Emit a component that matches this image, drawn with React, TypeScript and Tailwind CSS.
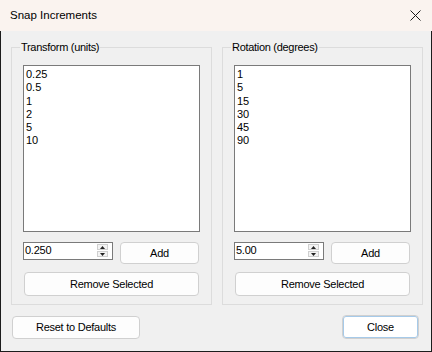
import React from "react";

const font = { fontFamily: '"Liberation Sans", Arial, sans-serif' };

function Btn({ children, className = "" }: { children: React.ReactNode; className?: string }) {
  return (
    <div
      className={
        "flex items-center justify-center rounded-[4px] border border-[#d0d0d0] bg-[#fdfdfd] text-[11px] tracking-[-0.25px] text-black " +
        className
      }
    >
      {children}
    </div>
  );
}

function Spin({ value }: { value: string }) {
  return (
    <div className="flex h-[18px] w-[90px] items-start border border-[#7a7a7a] bg-white">
      <div className="flex-1 pl-[1px] pt-[1px] text-[11px] leading-[13px] tracking-[-0.25px]">{value}</div>
      <div className="mr-[4px] mt-[1px] flex w-[11px] flex-col gap-[1px]">
        <div className="flex h-[6px] items-center justify-center border border-[#cfcfcf] bg-[#f3f3f3]">
          <svg width="5" height="3" viewBox="0 0 5 3">
            <path d="M0 3 L2.5 0 L5 3 Z" fill="#222" />
          </svg>
        </div>
        <div className="flex h-[6px] items-center justify-center border border-[#cfcfcf] bg-[#f3f3f3]">
          <svg width="5" height="3" viewBox="0 0 5 3">
            <path d="M0 0 L2.5 3 L5 0 Z" fill="#222" />
          </svg>
        </div>
      </div>
    </div>
  );
}

function Group({ title, items, value }: { title: string; items: string[]; value: string }) {
  return (
    <div className="w-[201px] pt-[7px]">
      <div className="relative h-[258px] border border-[#dcdcdc] pl-[11px] pt-[17px]">
        <div className="absolute left-[8px] top-[-8px] bg-[#f0f0f0] px-[1px] text-[11px] leading-[14px] tracking-[-0.3px]">
          {title}
        </div>
        <div className="h-[167px] w-[177px] border border-[#7a7a7a] bg-white pl-[2px] pt-[2px]">
          {items.map((it) => (
            <div key={it} className="text-[11px] leading-[13.3px]">
              {it}
            </div>
          ))}
        </div>
        <div className="mt-[10px] flex items-start gap-[7px]">
          <Spin value={value} />
          <Btn className="h-[22px] w-[79px]">Add</Btn>
        </div>
        <Btn className="ml-[1px] mt-[8px] h-[24px] w-[175px]">Remove Selected</Btn>
      </div>
    </div>
  );
}

export default function App() {
  return (
    <div className="flex h-[352px] w-[432px] flex-col bg-[#f0f0f0] text-black" style={font}>
      <div className="flex h-[31px] items-center justify-between bg-[#faf3ef] pl-[10px] pr-[11px]">
        <span className="text-[11.5px]">Snap Increments</span>
        <svg width="11" height="11" viewBox="0 0 11 11">
          <path d="M0.5 0.5 L10.5 10.5 M10.5 0.5 L0.5 10.5" stroke="#1a1a1a" strokeWidth="1" />
        </svg>
      </div>
      <div className="flex flex-1 flex-col border-x border-b border-[#1c1c1c] pl-[10px] pt-[9px]">
        <div className="flex gap-[10px]">
          <Group title="Transform (units)" items={["0.25", "0.5", "1", "2", "5", "10"]} value="0.250" />
          <Group title="Rotation (degrees)" items={["1", "5", "15", "30", "45", "90"]} value="5.00" />
        </div>
        <div className="mt-[10px] flex items-start justify-between pr-[12px]">
          <Btn className="ml-[1px] mt-[1px] h-[23px] w-[128px]">Reset to Defaults</Btn>
          <Btn className="h-[24px] w-[77px] border-[#0067c0] bg-white shadow-[inset_0_0_0_1px_rgba(0,103,192,0.35)]">
            Close
          </Btn>
        </div>
      </div>
    </div>
  );
}
